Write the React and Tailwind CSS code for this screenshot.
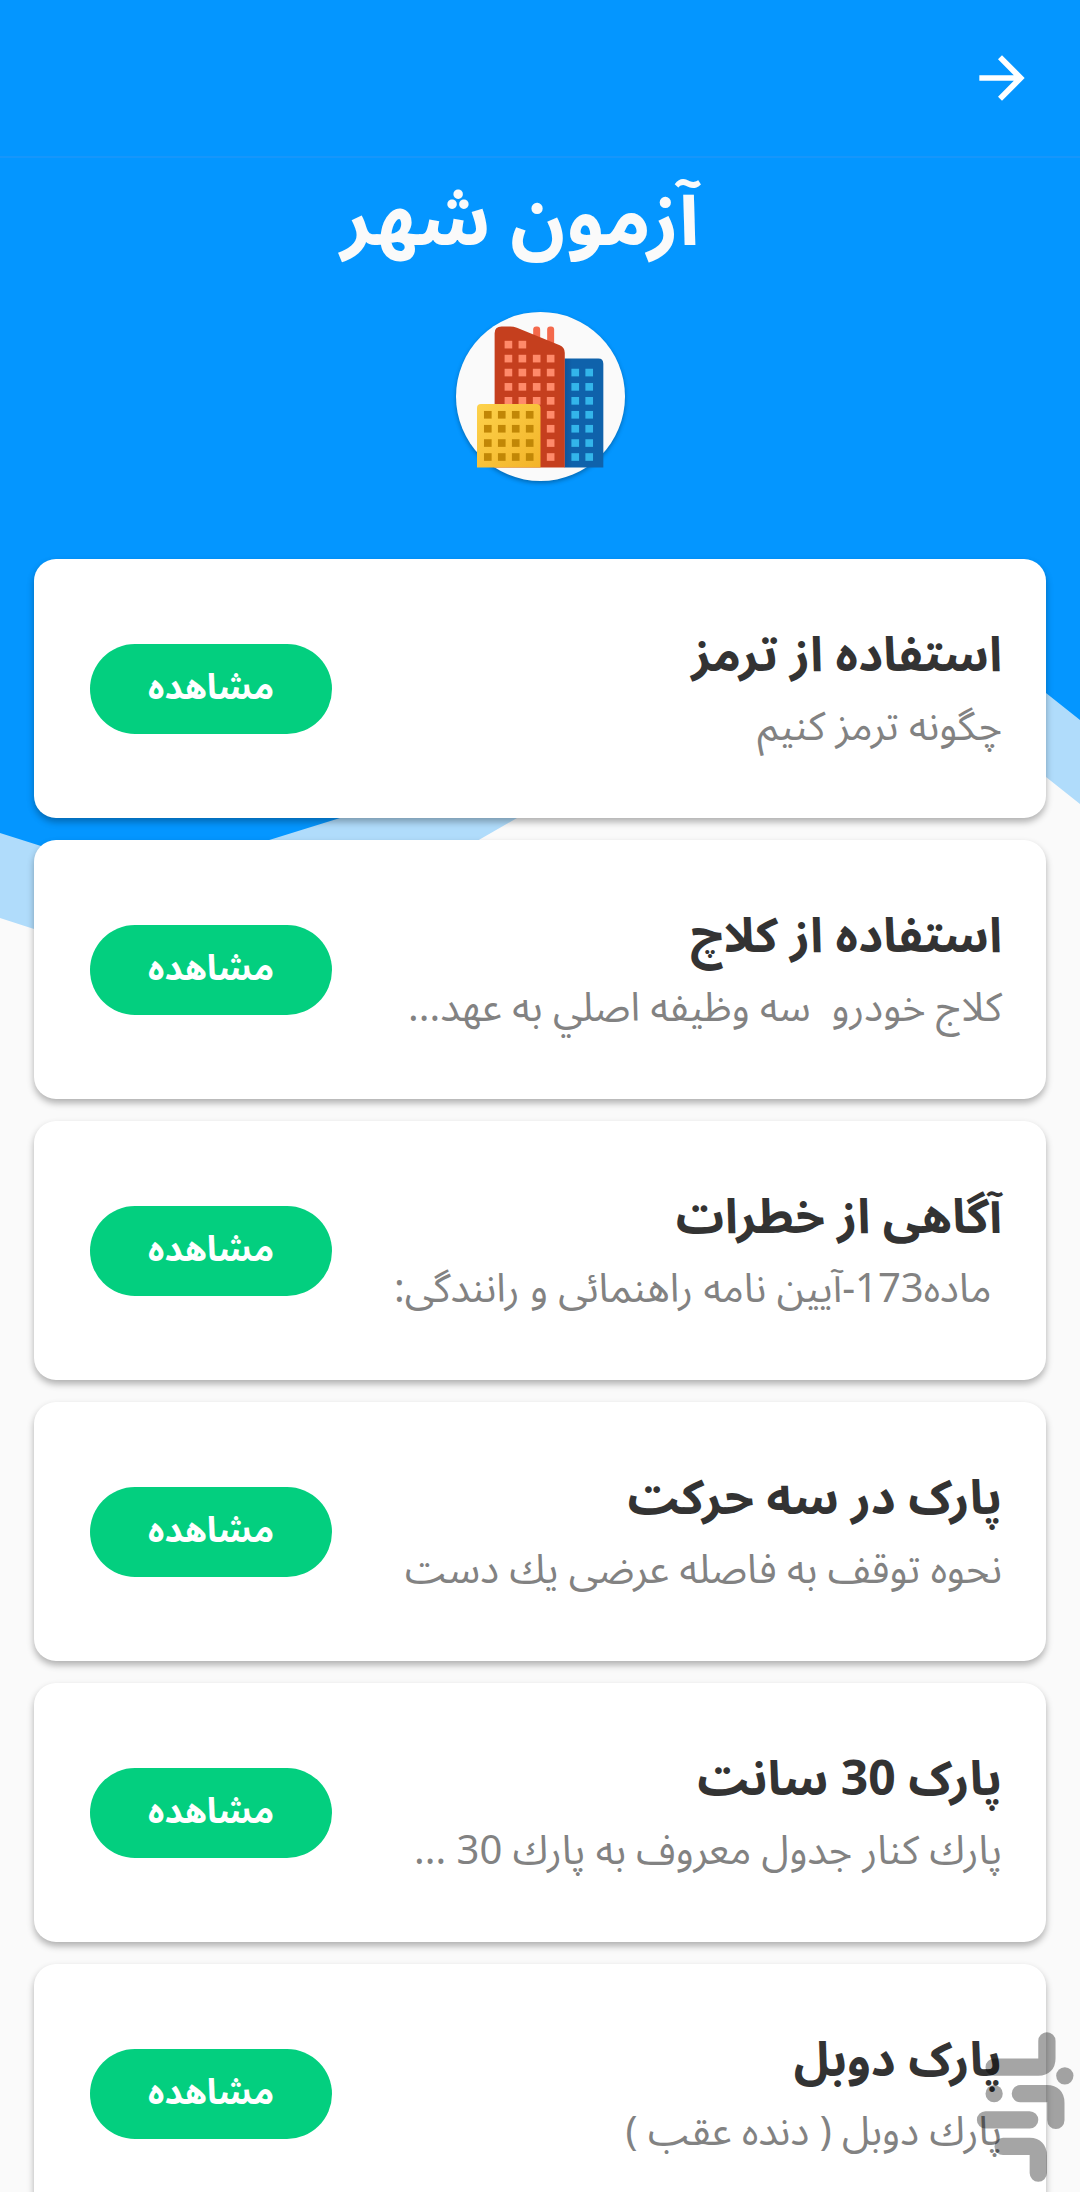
import React from 'react';
import { MdArrowForward } from 'react-icons/md';

const lessons = [
  { title: 'استفاده از ترمز', text: 'چگونه ترمز کنیم' },
  { title: 'استفاده از کلاچ', text: 'کلاج خودرو  سه وظیفه اصلي به عهد...' },
  { title: 'آگاهی از خطرات', text: ' ماده173-آیین نامه راهنمائی و رانندگی:' },
  { title: 'پارک در سه حرکت', text: 'نحوه توقف به فاصله عرضی يك دست' },
  { title: 'پارک 30 سانت', text: 'پارك كنار جدول معروف به پارك 30 ...' },
  { title: 'پارک دوبل', text: 'پارك دوبل ( دنده عقب )' },
];

// window grid of a building: cols x rows squares
const Windows = ({ xs, ys, fill }) =>
  ys.map((y) =>
    xs.map((x) => <rect key={`${x}-${y}`} x={x} y={y} width="23" height="23" fill={fill} />)
  );

const CityIcon = () => (
  <svg viewBox="140 106 382 426" className="w-[127px] h-[142px]" aria-hidden="true">
    <defs>
      <linearGradient id="yellow" x1="0" y1="0" x2="1" y2="1">
        <stop offset="0" stopColor="#fdd24c" />
        <stop offset="1" stopColor="#f3b328" />
      </linearGradient>
      <linearGradient id="blue" x1="0" y1="0" x2="1" y2="0">
        <stop offset="0" stopColor="#0d549a" />
        <stop offset="0.2" stopColor="#0f62ab" />
        <stop offset="1" stopColor="#0f62ab" />
      </linearGradient>
    </defs>
    <rect x="309" y="107" width="21" height="60" rx="9" fill="#f4694c" />
    <rect x="351" y="107" width="21" height="70" rx="9" fill="#f4694c" />
    <path d="M403 203H505Q520 203 520 219V531H403Z" fill="url(#blue)" />
    <path d="M193 531V127Q193 107 214 107H240Q250 107 260 111L389 163Q404 169 404 186V531Z" fill="#c53f1e" />
    <Windows xs={[223, 265]} ys={[150]} fill="#ff8a6a" />
    <Windows xs={[223, 265, 308, 350]} ys={[192, 234, 277, 319]} fill="#ff8a6a" />
    <Windows xs={[350]} ys={[361, 403, 446, 488]} fill="#ff8a6a" />
    <Windows xs={[424, 466]} ys={[234, 277, 319, 361, 403, 446, 488]} fill="#33b5ea" />
    <path d="M140 531V352Q140 340 152 340H319Q331 340 331 352V531Z" fill="url(#yellow)" />
    <Windows xs={[161, 203, 245, 287]} ys={[361, 403, 446, 488]} fill="#c18706" />
  </svg>
);

const Background = () => (
  <svg
    viewBox="0 0 1080 960"
    preserveAspectRatio="none"
    className="absolute inset-x-0 top-0 w-full h-[960px]"
    aria-hidden="true"
  >
    <path
      d="M0 0V918L34 929C170 970 330 925 477 841L517 818C660 730 850 620 1046 777L1080 804V0Z"
      fill="#b0dcfb"
    />
    <path
      d="M0 0V833L41 846C110 870 190 868 266 841L340 818C560 720 800 500 1046 693L1080 720V0Z"
      fill="#0496ff"
    />
  </svg>
);

const BazaarMark = () => (
  <svg
    viewBox="0 0 292 452"
    className="absolute right-[6px] bottom-[10px] w-[98px] h-[150px] pointer-events-none"
    fill="none"
    stroke="#000"
    strokeWidth="52"
    strokeLinecap="round"
    opacity="0.35"
    aria-hidden="true"
  >
    <path d="M53 106H186Q212 106 212 80V27" />
    <path d="M132 186H212Q239 186 239 213V266" />
    <path d="M27 265H160" />
    <path d="M80 345H160Q186 345 186 372V425" />
    <circle cx="266" cy="132" r="26" fill="#000" stroke="none" />
    <circle cx="53" cy="186" r="26" fill="#000" stroke="none" />
  </svg>
);

const LessonCard = ({ title, text }) => (
  <li className="flex items-center justify-between h-[259px] pr-11 pl-14 bg-white rounded-[22px] shadow-[0_4px_7px_rgba(0,0,0,0.3)]">
    <div className="min-w-0">
      <h2 className="text-[48px] leading-[72px] font-bold text-[#333333] whitespace-pre">{title}</h2>
      <p className="text-[40px] leading-[72px] text-[#828282] whitespace-pre">{text}</p>
    </div>
    <button
      type="button"
      className="shrink-0 w-[242px] h-[90px] pb-1 rounded-full bg-[#03cf7f] text-white text-[35px] font-bold"
    >
      مشاهده
    </button>
  </li>
);

const App = () => {
  return (
    <div
      dir="rtl"
      className="relative h-screen overflow-hidden bg-[#fafafa] font-['Noto_Sans','Noto_Sans_Arabic',sans-serif]"
    >
      <Background />

      <div className="relative">
        {/* Top bar */}
        <header className="flex items-center h-[158px] px-11 border-b-2 border-[#1696fb]">
          <button type="button" aria-label="بازگشت" className="text-white">
            <MdArrowForward size={68} />
          </button>
        </header>

        {/* Page title */}
        <div className="flex flex-col items-center h-[401px]">
          <h1 className="h-[154px] pr-10 text-[76px] leading-[116px] font-bold text-[#fafafa]">
            آزمون شهر
          </h1>
          <div className="flex items-center justify-center size-[169px] rounded-full bg-[#fafafa] shadow-[0_2px_4px_rgba(0,0,0,0.3)]">
            <CityIcon />
          </div>
        </div>

        {/* Lessons */}
        <ul className="flex flex-col gap-[22px] px-[34px]">
          {lessons.map((lesson) => (
            <LessonCard key={lesson.title} {...lesson} />
          ))}
        </ul>
      </div>

      <BazaarMark />
    </div>
  );
};

export default App;
